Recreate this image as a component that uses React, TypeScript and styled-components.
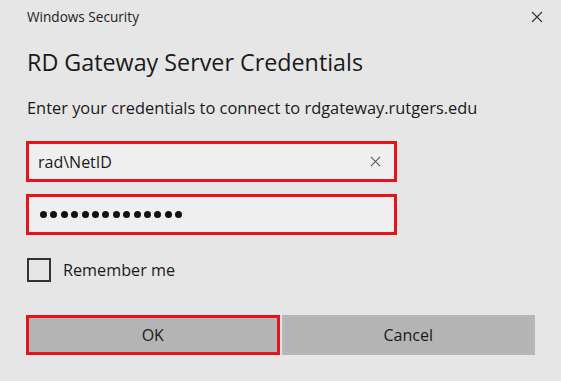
import React from "react";
import styled, { createGlobalStyle } from "styled-components";

const Global = createGlobalStyle`
  html, body { margin: 0; padding: 0; background: #e6e6e6; }
  body { font-family: "Open Sans", "Noto Sans", sans-serif; }
  * { box-sizing: border-box; }
`;

const Dialog = styled.div`
  width: 561px;
  height: 381px;
  background: #e6e6e6;
  padding: 0 26px 0 26px;
  display: flex;
  flex-direction: column;
  color: #1a1a1a;
`;

const TopBar = styled.div`
  height: 34px;
  display: flex;
  align-items: center;
  justify-content: space-between;
  padding-left: 1px;
`;

const Caption = styled.span`
  font-size: 13.6px;
  line-height: 16px;
  color: #222;
`;

const CloseButton = styled.button`
  width: 24px;
  height: 24px;
  margin-right: -14px;
  border: none;
  background: transparent;
  padding: 0;
  display: flex;
  align-items: center;
  justify-content: center;
  color: #333;
`;

const Heading = styled.h1`
  margin: 14px 0 0 1px;
  font-size: 23.3px;
  font-weight: 400;
  line-height: 28px;
  color: #1a1a1a;
`;

const Description = styled.p`
  margin: 22px 0 0 1px;
  font-size: 16.4px;
  line-height: 20px;
  color: #1a1a1a;
`;

const Field = styled.div<{ $top: number }>`
  margin-top: ${(p) => p.$top}px;
  width: 371px;
  height: 41px;
  border: 3px solid #e3151b;
  background: #efefef;
  display: flex;
  align-items: center;
  padding: 0 10px 0 9px;
`;

const FieldText = styled.span`
  flex: 1;
  font-size: 16px;
  color: #1a1a1a;
`;

const Dots = styled.div`
  display: flex;
  gap: 3.4px;
  padding-left: 2px;
`;

const Dot = styled.span`
  width: 7px;
  height: 7px;
  border-radius: 50%;
  background: #111;
`;

const ClearIcon = styled.span`
  display: flex;
  color: #555;
  margin-right: 3px;
`;

const CheckRow = styled.label`
  margin-top: 23px;
  margin-left: 1px;
  display: flex;
  align-items: center;
  gap: 12px;
  height: 24px;
`;

const CheckBox = styled.span`
  width: 24px;
  height: 24px;
  border: 2px solid #333;
  background: transparent;
`;

const CheckLabel = styled.span`
  font-size: 16.2px;
  color: #1a1a1a;
`;

const ButtonRow = styled.div`
  margin-top: 33px;
  display: flex;
  gap: 2px;
`;

const Button = styled.button<{ $focused?: boolean }>`
  flex: 1;
  height: 40px;
  background: #b4b4b4;
  border: 3px solid ${(p) => (p.$focused ? "#e3151b" : "#b7b7b7")};
  font-family: inherit;
  font-size: 16px;
  color: #1a1a1a;
  padding: 0;
`;

const X = ({ size, stroke }: { size: number; stroke: number }) => (
  <svg width={size} height={size} viewBox="0 0 12 12">
    <path d="M1 1 L11 11 M11 1 L1 11" stroke="currentColor" strokeWidth={stroke} fill="none" />
  </svg>
);

export default function App() {
  return (
    <>
      <Global />
      <Dialog>
        <TopBar>
          <Caption>Windows Security</Caption>
          <CloseButton aria-label="Close">
            <X size={12} stroke={1.1} />
          </CloseButton>
        </TopBar>
        <Heading>RD Gateway Server Credentials</Heading>
        <Description>Enter your credentials to connect to rdgateway.rutgers.edu</Description>
        <Field $top={23}>
          <FieldText>rad\NetID</FieldText>
          <ClearIcon>
            <X size={11} stroke={1.1} />
          </ClearIcon>
        </Field>
        <Field $top={12}>
          <Dots>
            {Array.from({ length: 14 }).map((_, i) => (
              <Dot key={i} />
            ))}
          </Dots>
        </Field>
        <CheckRow>
          <CheckBox />
          <CheckLabel>Remember me</CheckLabel>
        </CheckRow>
        <ButtonRow>
          <Button $focused>OK</Button>
          <Button>Cancel</Button>
        </ButtonRow>
      </Dialog>
    </>
  );
}
